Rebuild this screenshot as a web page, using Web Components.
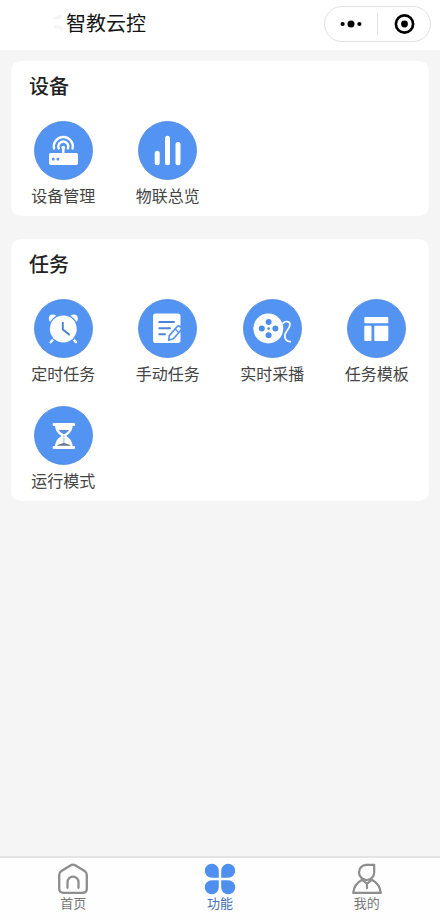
<!DOCTYPE html>
<html lang="zh-CN">
<head>
<meta charset="utf-8">
<meta name="viewport" content="width=device-width, initial-scale=1">
<title>智教云控</title>
<style>
html, body { margin: 0; }
body { font-family: "Noto Sans CJK SC", sans-serif; color: #1c1c1c; background: #f5f5f5; }
</style>
</head>
<body>
<app-shell>
  <app-header slot="header">智教云控</app-header>
  <feature-card heading="设备">
    <feature-item icon="router">设备管理</feature-item>
    <feature-item icon="bars">物联总览</feature-item>
  </feature-card>
  <feature-card heading="任务">
    <feature-item icon="alarm">定时任务</feature-item>
    <feature-item icon="note">手动任务</feature-item>
    <feature-item icon="reel">实时采播</feature-item>
    <feature-item icon="layout">任务模板</feature-item>
    <feature-item icon="hourglass">运行模式</feature-item>
  </feature-card>
  <tab-bar slot="footer">
    <tab-item icon="home" href="#home">首页</tab-item>
    <tab-item icon="clover" href="#features" active>功能</tab-item>
    <tab-item icon="user" href="#mine">我的</tab-item>
  </tab-bar>
</app-shell>
<script>
// 59-unit artwork placed on a blue disc
const featureIcons = {
  router: `
    <g fill="none" stroke="#fff" stroke-width="2.4" stroke-linecap="round">
      <path d="M20 27.5A9.5 9.5 0 1 1 38.6 27.5"/>
      <path d="M24.7 27.5A5 5 0 1 1 33.9 27.5"/>
      <path d="M29.3 27V33"/>
    </g>
    <circle cx="29.3" cy="26.6" r="1.9" fill="#fff"/>
    <rect x="15" y="32" width="29" height="12" rx="1.8" fill="#fff"/>
    <rect x="18" y="36.8" width="2.6" height="2.6" rx=".6" fill="#5394f3"/>
    <rect x="22.6" y="36.8" width="2.6" height="2.6" rx=".6" fill="#5394f3"/>`,
  bars: `
    <g stroke="#fff" stroke-width="5" stroke-linecap="round">
      <path d="M19.2 32.2V41.8M29.5 17.2V41.8M40 23.6V41.8"/>
    </g>`,
  alarm: `
    <g stroke="#fff" stroke-width="2.4" stroke-linecap="round">
      <path d="M21.3 38L16.6 43.2M37.3 38L42 43.2"/>
    </g>
    <circle cx="18.8" cy="19.4" r="4" fill="#fff"/>
    <circle cx="39.8" cy="19.4" r="4" fill="#fff"/>
    <circle cx="29.3" cy="30" r="14.3" fill="none" stroke="#5394f3" stroke-width="1.4" stroke-dasharray="15 30 200" stroke-dashoffset="90"/>
    <circle cx="29.3" cy="30" r="13.4" fill="#fff"/>
    <path d="M28.8 23.7V30.4L35 35.6" fill="none" stroke="#4a7fd0" stroke-width="1.9" stroke-linecap="round" stroke-linejoin="round"/>`,
  note: `
    <rect x="15" y="14.5" width="27.5" height="29.5" rx="2.8" fill="#fff"/>
    <path d="M21.3 23H36M21.3 29.2H32M21.3 35.3H27" stroke="#4b85db" stroke-width="2" stroke-linecap="round"/>
    <path d="M31.3 36.6L39 27.8Q40.4 26.3 41.9 27.5L42.8 28.4Q44.2 29.8 42.9 31.3L35.4 39.8L30.6 41.3Z" fill="#fff" stroke="#5394f3" stroke-width="1.7" stroke-linejoin="round"/>
    <path d="M37.2 30L40.7 33.4" stroke="#5394f3" stroke-width="1.4"/>`,
  reel: `
    <circle cx="25.3" cy="29.5" r="15" fill="#fff"/>
    <g fill="#4f8deb">
      <circle cx="25.6" cy="23" r="3"/><circle cx="25.6" cy="36.2" r="3"/>
      <circle cx="18.8" cy="29.6" r="3"/><circle cx="32.4" cy="29.6" r="3"/>
      <circle cx="25.6" cy="29.6" r="1.3"/>
    </g>
    <path d="M40 24.4C42 21.4 47.5 22.1 46.9 26.1C46.3 30 42.6 32 41.9 36.2C41.3 40 43.7 42.8 47.3 42.6" fill="none" stroke="#fff" stroke-width="1.7" stroke-linecap="round"/>`,
  layout: `
    <g fill="#fff">
      <rect x="17.3" y="18" width="24" height="6.2" rx="1"/>
      <rect x="17.3" y="26.8" width="7.2" height="15.2" rx="1"/>
      <rect x="27.3" y="26.8" width="14" height="15.2" rx="1"/>
    </g>`,
  hourglass: `
    <g fill="#fff">
      <rect x="18.6" y="16.9" width="22.4" height="3" rx="1"/>
      <rect x="18.6" y="39.9" width="22.4" height="3" rx="1"/>
      <path d="M21 19H38.7C38.5 24.5 36 27.4 32.2 29.9C36 32.4 38.5 35.3 38.7 41H21C21.2 35.3 23.7 32.4 27.5 29.9C23.7 27.4 21.2 24.5 21 19Z"/>
    </g>
    <path d="M24.7 24H35C34 26 32.2 27.2 29.8 28.2Q26 26.8 24.7 24Z" fill="#5a8fe0"/>
    <path d="M22.9 39.8Q24 38.1 27.5 37.8Q29.3 37.4 29.9 36.6Q30.5 37.4 32.3 37.8Q35.8 38.1 36.8 39.8Z" fill="#64778f"/>
    <path d="M29.9 29V37" stroke="#86aee8" stroke-width=".8"/>`
};

const tabIcons = {
  home: `<path d="M13.4 2.4Q16 .9 18.6 2.4L27.6 8Q29.8 9.4 29.8 12V25.4Q29.8 29.8 25.4 29.8H6.6Q2.2 29.8 2.2 25.4V12Q2.2 9.4 4.4 8Z M10.5 24.8V19.2a5.5 5.5 0 0 1 11 0V24.8" fill="none" stroke="#8d8d8d" stroke-width="2.3" stroke-linecap="round" stroke-linejoin="round"/>`,
  clover: `<g fill="#4f90ee">
      <path d="M14.8 14.8H7.8A7 7 0 1 1 14.8 7.8Z"/>
      <path d="M17.2 14.8V7.8A7 7 0 1 1 24.2 14.8Z"/>
      <path d="M14.8 17.2V24.2A7 7 0 1 1 7.8 17.2Z"/>
      <path d="M17.2 17.2H24.2A7 7 0 1 1 17.2 24.2Z"/>
    </g>`,
  user: `<g fill="none" stroke="#8d8d8d" stroke-width="2.2" stroke-linejoin="round" stroke-linecap="round">
      <path d="M23.2 1.8H15.2A7.6 7.6 0 1 0 23.2 9.4Z"/>
      <path d="M10.8 16.9Q3.2 20.8 2.2 29.8H29.8Q28.8 20.8 21.2 16.9"/>
      <path d="M11.5 17.2L16 20.7L20.5 17.2"/><path d="M16 20.7V25.2"/>
    </g>`
};

function define(name, render) {
  customElements.define(name, class extends HTMLElement {
    connectedCallback() {
      if (this.shadowRoot) return;
      const template = document.createElement('template');
      template.innerHTML = render(this);
      this.attachShadow({ mode: 'open' }).append(template.content.cloneNode(true));
    }
  });
}

define('app-shell', () => `
  <style>
    :host { display: flex; flex-direction: column; min-height: 100vh; }
    main { flex: 1; display: flex; flex-direction: column; gap: 23px; padding: 11px; }
  </style>
  <slot name="header"></slot>
  <main><slot></slot></main>
  <slot name="footer"></slot>`);

define('app-header', () => `
  <style>
    :host { display: block; background: #fff; }
    header { display: flex; align-items: flex-start; padding: 6px 9px 8px 52px; }
    .smudge { width: 14px; height: 32px; }
    h1 { flex: 1; margin: 0; font-size: 20px; line-height: 34px; font-weight: 400; color: #151515; }
  </style>
  <header>
    <svg class="smudge" viewBox="0 0 14 32" aria-hidden="true"><path d="M3 12L9 10.5M3 21Q7 20 10 23" fill="none" stroke="#f5f5f5" stroke-width="3" stroke-linecap="round"/></svg>
    <h1><slot></slot></h1>
    <capsule-menu></capsule-menu>
  </header>`);

define('capsule-menu', () => `
  <style>
    :host { display: flex; box-sizing: border-box; width: 107px; height: 36px; border: 1px solid #e2e2e2; border-radius: 18px; align-items: center; }
    button { flex: 1; display: flex; justify-content: center; padding: 0; border: 0; background: none; }
    svg { width: 24px; height: 24px; }
    i { width: 1px; height: 22px; background: #e2e2e2; }
  </style>
  <button type="button" aria-label="更多"><svg viewBox="0 0 24 24"><circle cx="3.6" cy="12" r="2.1"/><circle cx="12" cy="12" r="3.5"/><circle cx="20.4" cy="12" r="2.1"/></svg></button>
  <i></i>
  <button type="button" aria-label="关闭"><svg viewBox="0 0 24 24"><circle cx="12.5" cy="12" r="8.6" fill="none" stroke="#000" stroke-width="2.7"/><circle cx="12.5" cy="12" r="3.4"/></svg></button>`);

define('feature-card', el => `
  <style>
    :host { display: block; background: #fff; border-radius: 10px; padding: 12px 0 10px; }
    h2 { margin: 0 0 22px; padding: 0 18px; font-size: 20px; line-height: 26px; font-weight: 500; color: #222; }
    div { display: grid; grid-template-columns: repeat(4, 1fr); row-gap: 22px; }
  </style>
  <h2>${el.getAttribute('heading')}</h2>
  <div><slot></slot></div>`);

define('feature-item', el => `
  <style>
    :host { display: block; }
    button { display: flex; flex-direction: column; align-items: center; gap: 4px; width: 100%; padding: 0; border: 0; background: none; font: inherit; font-size: 16px; line-height: 22px; color: #444; }
    svg { display: block; width: 59px; height: 59px; }
  </style>
  <button type="button">
    <svg viewBox="0 0 59 59" aria-hidden="true"><circle cx="29.5" cy="29.5" r="29" fill="#5394f3" stroke="#4b86dc" stroke-width=".8"/>${featureIcons[el.getAttribute('icon')]}</svg>
    <span><slot></slot></span>
  </button>`);

define('tab-bar', () => `
  <style>
    :host { display: block; background: #fefefe; border-top: 2px solid #e4e4e4; }
    nav { display: grid; grid-template-columns: repeat(3, 1fr); padding: 5px 0 7px; }
  </style>
  <nav><slot></slot></nav>`);

define('tab-item', el => `
  <style>
    :host { display: block; color: #777; }
    :host([active]) { color: #4470b4; }
    a { display: flex; flex-direction: column; align-items: center; color: inherit; text-decoration: none; font-size: 13px; line-height: 16px; }
    svg { display: block; width: 32px; height: 32px; }
  </style>
  <a href="${el.getAttribute('href')}"${el.hasAttribute('active') ? ' aria-current="page"' : ''}>
    <svg viewBox="0 0 32 32" aria-hidden="true">${tabIcons[el.getAttribute('icon')]}</svg>
    <span><slot></slot></span>
  </a>`);
</script>
</body>
</html>
